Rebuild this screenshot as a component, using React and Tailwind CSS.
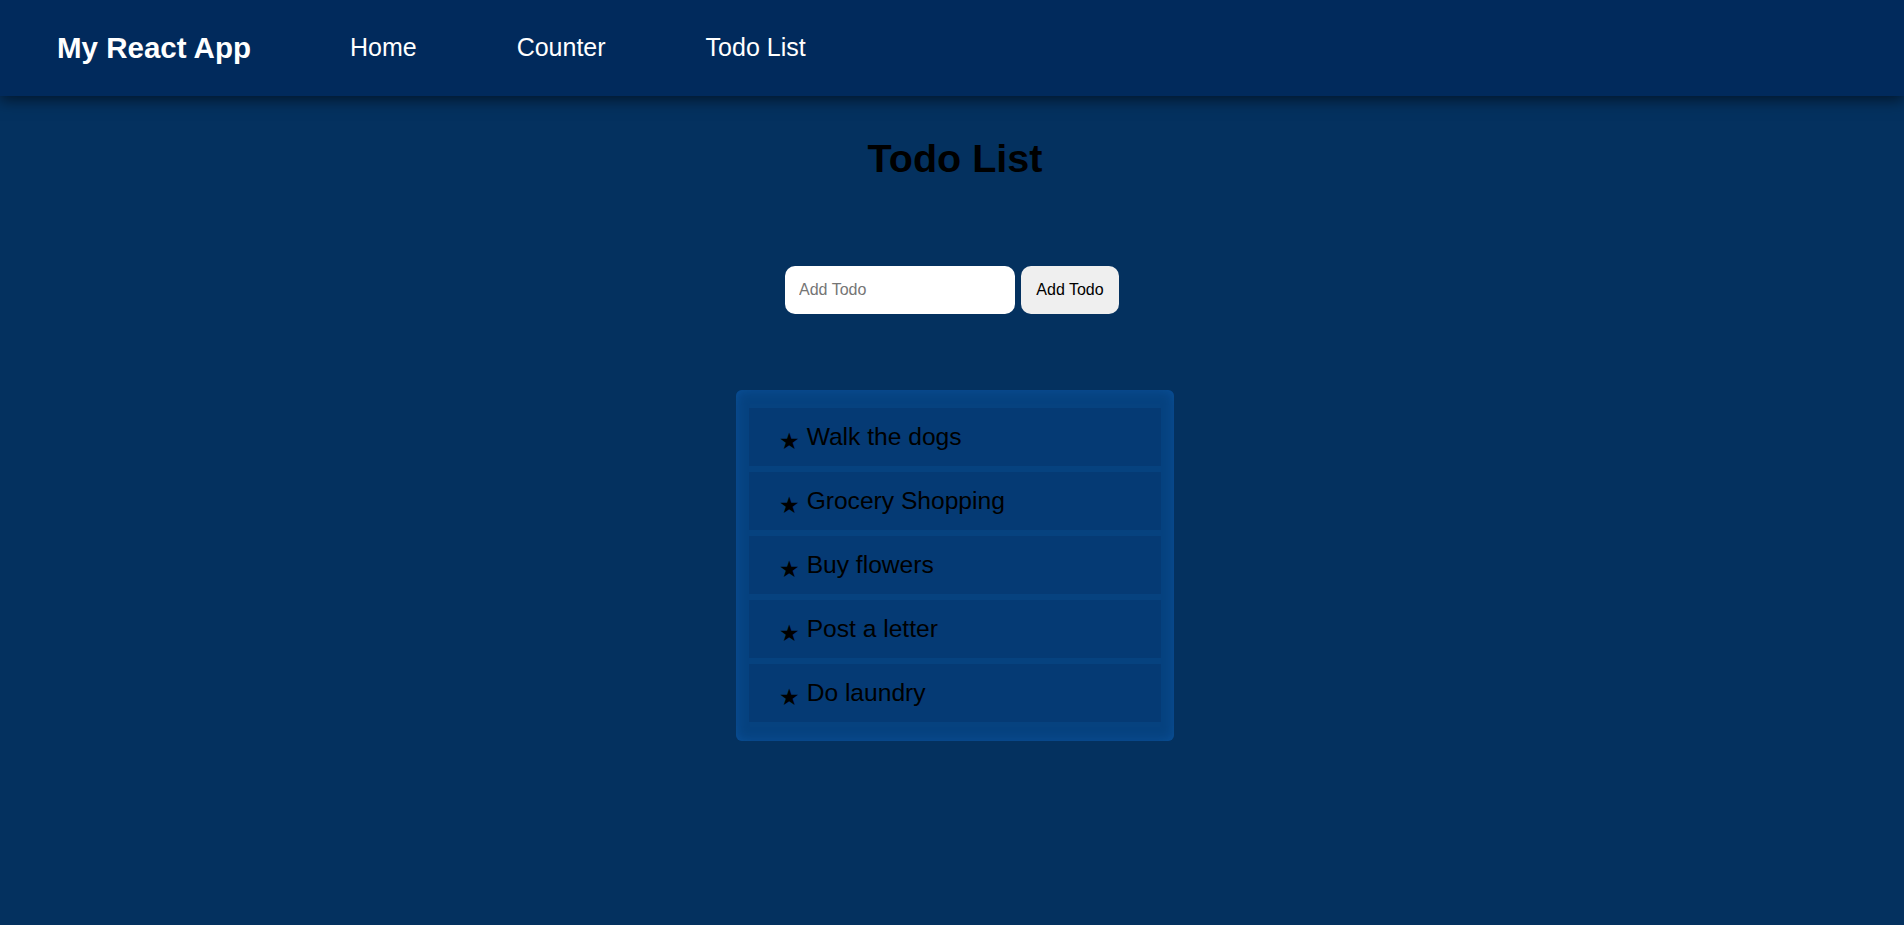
import React, { useState } from "react";

const initialTodos = [
  "Walk the dogs",
  "Grocery Shopping",
  "Buy flowers",
  "Post a letter",
  "Do laundry",
];

function Navbar() {
  return (
    <nav className="relative z-10 flex h-[96px] items-center bg-[#012a5c] pl-[57px] shadow-[0_4px_14px_rgba(0,0,0,0.55)]">
      <span className="text-[29.5px] font-bold text-white">My React App</span>
      <ul className="ml-[99px] flex items-center gap-[100px] text-[25px] text-white">
        <li>Home</li>
        <li>Counter</li>
        <li>Todo List</li>
      </ul>
    </nav>
  );
}

function TodoItem({ text }) {
  return (
    <li className="flex h-[58px] items-center bg-[#053a74] pl-[30px] text-[24.6px] leading-[1.15] text-black">
      <span className="relative top-[4px] mr-[7px] font-['DejaVu_Sans',sans-serif] text-[23px] leading-none">★</span>
      <span>{text}</span>
    </li>
  );
}

export default function App() {
  const [todos, setTodos] = useState(initialTodos);
  const [value, setValue] = useState("");

  const addTodo = () => {
    if (!value.trim()) return;
    setTodos([...todos, value.trim()]);
    setValue("");
  };

  return (
    <div className="min-h-[925px] bg-[#04315f] font-['Liberation_Sans',Arial,sans-serif]">
      <Navbar />
      <main className="flex flex-col items-center">
        <h1 className="ml-[6px] mt-[40px] text-[39.5px] font-bold leading-[1.15] text-black">Todo List</h1>

        <div className="mt-[85px] flex gap-[6px]">
          <input
            className="h-[48px] w-[230px] rounded-[10px] bg-white px-[14px] text-[16px] text-black placeholder:text-[#757575] outline-none"
            placeholder="Add Todo"
            value={value}
            onChange={(e) => setValue(e.target.value)}
          />
          <button
            className="h-[48px] w-[98px] rounded-[10px] bg-[#efefef] text-[16px] text-black"
            onClick={addTodo}
          >
            Add Todo
          </button>
        </div>

        <ul className="ml-[6px] mt-[76px] flex w-[438px] flex-col gap-[6px] rounded-[6px] bg-[#06427f] px-[13px] pt-[18px] pb-[19px] shadow-[inset_0_0_12px_#0b5099]">
          {todos.map((t, i) => (
            <TodoItem key={i} text={t} />
          ))}
        </ul>
      </main>
    </div>
  );
}
